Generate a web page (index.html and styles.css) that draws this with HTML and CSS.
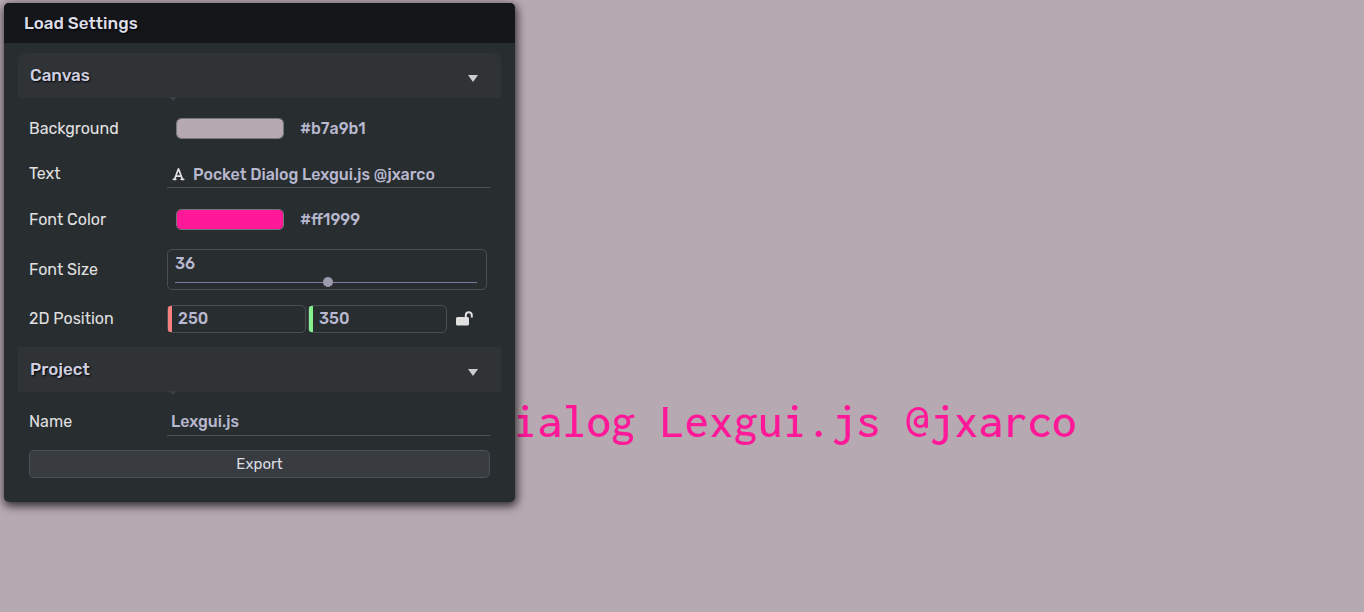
FILE: index.html
```
<!DOCTYPE html>
<html lang="en">
<head>
<meta charset="utf-8">
<meta name="viewport" content="width=device-width, initial-scale=1">
<title>Load Settings</title>
<link rel="stylesheet" href="styles.css">
</head>
<body>
<main class="stage">
  <p class="stage-text">Pocket Dialog Lexgui.js @jxarco</p>

  <section class="dialog" aria-labelledby="dialog-title">
    <h1 class="dialog-title" id="dialog-title">Load Settings</h1>
    <form class="dialog-body">
      <details class="branch" open>
        <summary class="branch-title branch-title-first">Canvas
          <svg class="caret" viewBox="0 0 10 7" aria-hidden="true"><path d="M0 0h10L5 7z"/></svg>
        </summary>
        <div class="rows">
          <div class="row">
            <label for="background">Background</label>
            <div class="color-field">
              <input class="swatch" type="color" id="background" value="#b7a9b1">
              <output class="hex" for="background">#b7a9b1</output>
            </div>
          </div>
          <div class="row row-text">
            <label for="text">Text</label>
            <div class="line-field">
              <svg class="font-icon" viewBox="0 0 448 512" aria-hidden="true"><path d="M254 52.800C249.300 40.300 237.300 32 224 32s-25.300 8.300-30 20.800L57.800 416H32c-17.700 0-32 14.300-32 32s14.300 32 32 32h96c17.700 0 32-14.300 32-32s-14.300-32-32-32h-1.800l18-48h159.600l18 48H320c-17.700 0-32 14.300-32 32s14.300 32 32 32h96c17.700 0 32-14.300 32-32s-14.300-32-32-32h-25.800zM279.800 304H168.200L224 155.100z"/></svg>
              <input type="text" id="text" value="Pocket Dialog Lexgui.js @jxarco">
            </div>
          </div>
          <div class="row">
            <label for="font-color">Font Color</label>
            <div class="color-field">
              <input class="swatch" type="color" id="font-color" value="#ff1999">
              <output class="hex" for="font-color">#ff1999</output>
            </div>
          </div>
          <div class="row row-tall">
            <label for="font-size">Font Size</label>
            <div class="slider-field">
              <input class="slider-value" type="text" inputmode="numeric" id="font-size" value="36">
              <input class="slider" type="range" aria-label="Font Size slider" min="1" max="70" value="36">
            </div>
          </div>
          <div class="row">
            <label for="pos-x">2D Position</label>
            <div class="vector-field">
              <span class="component component-x"><input type="text" id="pos-x" value="250"></span>
              <span class="component component-y"><input type="text" aria-label="2D Position Y" value="350"></span>
              <button class="lock" type="button" aria-label="Lock ratio">
                <svg viewBox="0 0 17 15" aria-hidden="true"><path fill="currentColor" d="M1.500 6H11.500a1.500 1.500 0 0 1 1.500 1.500V13a1.500 1.500 0 0 1-1.500 1.500H1.500A1.500 1.500 0 0 1 0 13V7.500A1.500 1.500 0 0 1 1.500 6z"/><path fill="none" stroke="currentColor" stroke-width="2" d="M9.800 6.500V4.200a3 3 0 0 1 6 0V6.500"/></svg>
              </button>
            </div>
          </div>
        </div>
      </details>

      <details class="branch" open>
        <summary class="branch-title">Project
          <svg class="caret" viewBox="0 0 10 7" aria-hidden="true"><path d="M0 0h10L5 7z"/></svg>
        </summary>
        <div class="rows">
          <div class="row">
            <label for="name">Name</label>
            <div class="line-field"><input type="text" id="name" value="Lexgui.js"></div>
          </div>
          <button class="export" type="button">Export</button>
        </div>
      </details>
    </form>
  </section>
</main>
</body>
</html>
```
FILE: styles.css
```
* { box-sizing: border-box; }

body {
  margin: 0;
  background: #b7a9b1;
  color: #e0e0e0;
  font-family: Rubik, Roboto, "Liberation Sans", sans-serif;
  font-size: 16px;
}

input, button { font: inherit; color: inherit; }

.stage {
  position: relative;
  min-height: 100vh;
  overflow: hidden;
}

.stage-text {
  position: absolute;
  left: 317px;
  top: 397px;
  margin: 0;
  color: #ff1999;
  font: 500 49px/48px Inconsolata, "Liberation Mono", monospace;
  white-space: pre;
}

.dialog {
  position: absolute;
  left: 4px;
  top: 3px;
  width: min(511px, calc(100% - 8px));
  border-radius: 5px;
  background: #282d30;
  box-shadow: 1px 3px 10px 1px rgba(0, 0, 0, 0.75);
}

.dialog-title {
  margin: 0;
  padding: 0 20px;
  border-radius: 5px 5px 0 0;
  background: #151619;
  color: #dddde8;
  font-size: 17px;
  font-weight: 500;
  line-height: 40px;
  text-shadow: 1px 1px 2px #000;
}

.dialog-body { padding: 10px 14px 24px; }

.branch-title {
  position: relative;
  display: flex;
  align-items: center;
  justify-content: space-between;
  height: 45px;
  padding: 0 23px 2px 12px;
  background: #2f3336;
  color: #d0d0e2;
  font-size: 17px;
  font-weight: 500;
  text-shadow: 1px 1px 2px #000;
  cursor: pointer;
}

.branch-title-first { border-radius: 8px 8px 0 0; }

/* Handle of the label column */
.branch-title::after {
  content: "";
  position: absolute;
  left: 151px;
  bottom: -3px;
  border: 4px solid transparent;
  border-top-color: #3a3e42;
  border-bottom: 0;
}

.caret {
  width: 10px;
  height: 7px;
  margin-top: 7px;
  fill: #ccc;
}

.rows { padding: 8px 11px 0; }
.branch + .branch { margin-top: 7px; }

.row {
  display: grid;
  grid-template-columns: 138px minmax(0, 1fr);
  align-items: center;
  min-height: 45px;
}

.row:last-of-type { min-height: 43px; }
.row-text { min-height: 46px; }
.row-tall { min-height: 55px; }
.row label { padding-bottom: 1px; }

.color-field, .line-field, .vector-field {
  display: flex;
  align-items: center;
}

.color-field { gap: 16px; padding-left: 9px; }

.swatch {
  width: 108px;
  height: 21px;
  padding: 0;
  border: 1px solid #77767a;
  border-radius: 5px;
  background: none;
  overflow: hidden;
}

.swatch::-webkit-color-swatch-wrapper { padding: 0; }
.swatch::-webkit-color-swatch { border: 0; border-radius: 4px; }

.hex, .line-field input, .slider-value, .component input {
  color: #b8b8cf;
  font-weight: 500;
}

.line-field {
  height: 28px;
  padding: 0 4px;
  border-bottom: 1px solid #505458;
}

.line-field input {
  flex: 1;
  min-width: 0;
  padding: 1px 0 0;
  border: 0;
  background: none;
}

.font-icon {
  width: 13px;
  height: 14px;
  margin: 0 8px 0 1px;
  fill: #e0e0e0;
}

.slider-field {
  display: flex;
  flex-direction: column;
  height: 41px;
  margin-right: 3px;
  padding: 2px 9px 1px 7px;
  border: 1px solid #4a4e53;
  border-radius: 5px;
}

.slider-value {
  width: 100%;
  height: 22px;
  padding: 0;
  border: 0;
  background: none;
}

.slider {
  width: 100%;
  height: 14px;
  margin: 0;
  appearance: none;
  background: linear-gradient(#7d7a9e, #7d7a9e) left 8px / 100% 1px no-repeat;
}

.slider::-webkit-slider-thumb {
  appearance: none;
  width: 10px;
  height: 10px;
  margin-top: 1px;
  border-radius: 50%;
  background: #9c9bae;
}

.vector-field { gap: 2px; }

.component {
  flex: 1;
  height: 28px;
  max-width: 139px;
  border: 1px solid #4a4e53;
  border-radius: 5px;
}

.component input {
  display: block;
  width: 100%;
  height: 26px;
  padding: 0 0 0 6px;
  border: 0;
  border-left: 4px solid #f77f7f;
  border-radius: 2px;
  background: none;
}

.component-y input { border-left-color: #85f08d; }

.lock {
  display: grid;
  margin-left: 7px;
  padding: 0;
  border: 0;
  background: none;
}

.lock svg { width: 17px; height: 15px; }

.export {
  display: block;
  width: 100%;
  height: 28px;
  margin-top: 7px;
  padding: 0;
  border: 1px solid #4d5059;
  border-radius: 5px;
  background: #383c40;
  color: #dcdce6;
  font-size: 15px;
}
```
